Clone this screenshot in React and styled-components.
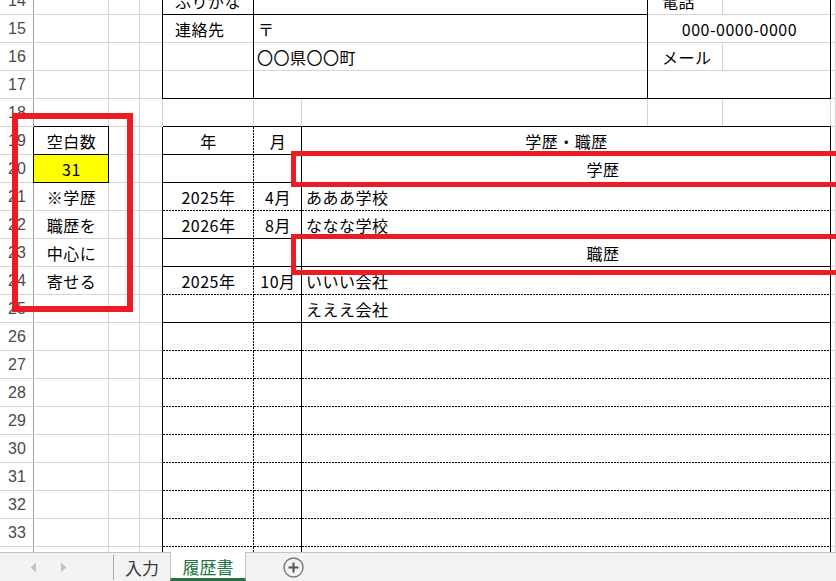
import React from 'react';
import styled, { createGlobalStyle } from 'styled-components';

const GlobalStyle = createGlobalStyle`
  html, body { margin: 0; padding: 0; background: #fff; }
  body { font-family: "Noto Sans CJK JP", "Noto Sans", sans-serif; }
`;

const COLS = '34px 75px 31px 23px 91px 48px 346px 75px 108px 1fr';
const GRID = '#d4d4d4';

const layer = (side, kind) => {
  if (!kind || kind === 'none') return null;
  const horiz = side === 'b';
  const pos = horiz ? 'left bottom / 100% 1px' : 'right top / 1px 100%';
  const dir = horiz ? 'to right' : 'to bottom';
  if (kind === 'dash') {
    return `repeating-linear-gradient(${dir}, #000 0 2px, transparent 2px 3px) ${pos} no-repeat`;
  }
  const c = kind === 'solid' ? '#000' : kind === 'head' ? '#a3a3a3' : GRID;
  return `linear-gradient(${c}, ${c}) ${pos} no-repeat`;
};
const rank = (k) => (k === 'solid' || k === 'dash' ? 0 : 1);
const edges = ({ $b = 'grid', $r = 'grid', $bg = '#fff' }) => {
  const parts = [['b', $b], ['r', $r]]
    .sort((x, y) => rank(x[1]) - rank(y[1]))
    .map(([s, k]) => layer(s, k))
    .filter(Boolean);
  return [...parts, $bg].join(', ');
};

const Window = styled.div`
  width: 836px;
  height: 581px;
  overflow: hidden;
  display: flex;
  flex-direction: column;
  background: #fff;
`;

const Sheet = styled.div`
  position: relative;
  flex: none;
  height: 552px;
  overflow: hidden;
`;

const Rows = styled.div`
  margin-top: -13px;
  display: flex;
  flex-direction: column;
`;

const Row = styled.div`
  display: grid;
  grid-template-columns: ${COLS};
  height: 28px;
`;

const Cell = styled.div`
  grid-column: span ${(p) => p.$span || 1};
  box-sizing: border-box;
  background: ${edges};
  display: flex;
  align-items: center;
  justify-content: ${(p) => (p.$center ? 'center' : 'flex-start')};
  padding: 0 0 1px ${(p) => p.$pl || 0}px;
  font-size: 16px;
  letter-spacing: 0.5px;
  color: #000;
  white-space: nowrap;
  overflow: hidden;
`;

const Head = styled(Cell).attrs((p) => ({ $r: p.$r || 'head', $center: true }))`
  font-family: "Liberation Sans", "Noto Sans", sans-serif;
  font-size: 16px;
  letter-spacing: 0;
  color: #4a4a4a;
`;

const Highlight = styled.div`
  position: absolute;
  left: ${(p) => p.$x}px;
  top: ${(p) => p.$y}px;
  width: ${(p) => p.$w}px;
  height: ${(p) => p.$h}px;
  border: ${(p) => p.$t}px solid #ed1c24;
  box-sizing: border-box;
  pointer-events: none;
`;

const TabBar = styled.div`
  flex: none;
  height: 29px;
  box-sizing: border-box;
  border-top: 1px solid #c3c3c3;
  background: #f3f3f3;
  display: flex;
  align-items: stretch;
  font-family: "Noto Sans CJK JP", sans-serif;
`;

const NavArea = styled.div`
  width: 113px;
  padding-left: 18px;
  box-sizing: border-box;
  display: flex;
  align-items: center;
`;

const NavButton = styled.div`
  width: 30px;
  height: 100%;
  display: flex;
  align-items: center;
  justify-content: center;
`;

const Divider = styled.div`
  width: 1px;
  margin: 2px 0 1px;
  background: #a8a8a8;
`;

const Tab = styled.div`
  width: ${(p) => p.$w}px;
  box-sizing: border-box;
  display: flex;
  align-items: center;
  justify-content: center;
  font-size: 17px;
  color: ${(p) => (p.$active ? '#217346' : '#3a3a3a')};
  background: ${(p) => (p.$active ? '#fff' : 'transparent')};
  border-left: ${(p) => (p.$active ? '1px solid #c3c3c3' : 'none')};
  border-right: ${(p) => (p.$active ? '1px solid #c3c3c3' : 'none')};
  border-bottom: ${(p) => (p.$active ? '3px solid #217346' : 'none')};
  margin-top: ${(p) => (p.$active ? '-1px' : '0')};
  padding-top: ${(p) => (p.$active ? '3px' : '0')};
`;

const AddButton = styled.div`
  margin-left: 37px;
  display: flex;
  align-items: center;
`;

const Triangle = ({ dir }) => (
  <svg width="7" height="11" viewBox="0 0 7 11">
    {dir === 'left' ? (
      <path d="M6 0.5 L0.8 5.5 L6 10.5 Z" fill="#c2c2c2" />
    ) : (
      <path d="M1 0.5 L6.2 5.5 L1 10.5 Z" fill="#c2c2c2" />
    )}
  </svg>
);

const PlusCircle = () => (
  <svg width="21" height="21" viewBox="0 0 21 21">
    <circle cx="10.5" cy="10.5" r="9.5" fill="none" stroke="#7a7a7a" strokeWidth="1.4" />
    <path d="M10.5 5.5 V15.5 M5.5 10.5 H15.5" stroke="#555" strokeWidth="2" />
  </svg>
);

const history = [
  { n: 21, side: '※学歴', year: '2025年', month: '4月', text: 'あああ学校', line: 'dash' },
  { n: 22, side: '職歴を', year: '2026年', month: '8月', text: 'ななな学校', line: 'solid' },
  { n: 23, side: '中心に', text: '職歴', heading: true, line: 'solid' },
  { n: 24, side: '寄せる', year: '2025年', month: '10月', text: 'いいい会社', line: 'dash' },
  { n: 25, text: 'えええ会社', line: 'solid' },
  ...[26, 27, 28, 29, 30, 31, 32, 33, 34].map((n) => ({ n, line: 'dash' })),
];

export default function App() {
  return (
    <Window>
      <GlobalStyle />
      <Sheet>
        <Rows>
          <Row>
            <Head>14</Head>
            <Cell />
            <Cell />
            <Cell $r="solid" />
            <Cell $r="solid" $b="solid" $pl={12}>ふりがな</Cell>
            <Cell $span={2} $r="solid" $b="solid" />
            <Cell $pl={14}>電話</Cell>
            <Cell $r="solid" />
            <Cell />
          </Row>
          <Row>
            <Head>15</Head>
            <Cell />
            <Cell />
            <Cell $r="solid" />
            <Cell $r="solid" $pl={12}>連絡先</Cell>
            <Cell $span={2} $r="solid" $pl={4}>〒</Cell>
            <Cell $span={2} $r="solid" $center>000-0000-0000</Cell>
            <Cell />
          </Row>
          <Row>
            <Head>16</Head>
            <Cell />
            <Cell />
            <Cell $r="solid" />
            <Cell $r="solid" />
            <Cell $span={2} $r="solid" $pl={3}>〇〇県〇〇町</Cell>
            <Cell $pl={14}>メール</Cell>
            <Cell $r="solid" />
            <Cell />
          </Row>
          <Row>
            <Head>17</Head>
            <Cell />
            <Cell />
            <Cell $r="solid" />
            <Cell $r="solid" $b="solid" />
            <Cell $span={2} $r="solid" $b="solid" />
            <Cell $span={2} $r="solid" $b="solid" />
            <Cell />
          </Row>
          <Row>
            <Head>18</Head>
            <Cell $b="solid" />
            <Cell />
            <Cell />
            <Cell $b="solid" />
            <Cell $b="solid" />
            <Cell $b="solid" />
            <Cell $b="solid" />
            <Cell $b="solid" />
            <Cell />
          </Row>
          <Row>
            <Head $r="solid">19</Head>
            <Cell $r="solid" $b="solid" $center>空白数</Cell>
            <Cell />
            <Cell $r="solid" />
            <Cell $r="dash" $b="solid" $center>年</Cell>
            <Cell $r="solid" $b="solid" $center>月</Cell>
            <Cell $span={3} $r="solid" $b="solid" $center>学歴・職歴</Cell>
            <Cell />
          </Row>
          <Row>
            <Head $r="solid">20</Head>
            <Cell $r="solid" $b="solid" $bg="#ffff00" $center>31</Cell>
            <Cell />
            <Cell $r="solid" />
            <Cell $r="dash" $b="solid" />
            <Cell $r="solid" $b="solid" />
            <Cell $span={3} $r="solid" $b="solid" $center $pl={73}>学歴</Cell>
            <Cell />
          </Row>
          {history.map((h) => (
            <Row key={h.n}>
              <Head>{h.n}</Head>
              <Cell $center>{h.side}</Cell>
              <Cell />
              <Cell $r="solid" />
              <Cell $r="dash" $b={h.line} $center>{h.year}</Cell>
              <Cell $r="solid" $b={h.line} $center>{h.month}</Cell>
              {h.heading ? (
                <Cell $span={3} $r="solid" $b={h.line} $center $pl={73}>{h.text}</Cell>
              ) : (
                <Cell $span={3} $r="solid" $b={h.line} $pl={4}>{h.text}</Cell>
              )}
              <Cell />
            </Row>
          ))}
        </Rows>
        <Highlight $x={12} $y={113} $w={121} $h={199} $t={6} />
        <Highlight $x={291} $y={151} $w={560} $h={36} $t={5} />
        <Highlight $x={291} $y={234} $w={560} $h={41} $t={5} />
      </Sheet>
      <TabBar>
        <NavArea>
          <NavButton><Triangle dir="left" /></NavButton>
          <NavButton><Triangle dir="right" /></NavButton>
        </NavArea>
        <Divider />
        <Tab $w={56}>入力</Tab>
        <Tab $w={76} $active>履歴書</Tab>
        <AddButton><PlusCircle /></AddButton>
      </TabBar>
    </Window>
  );
}
